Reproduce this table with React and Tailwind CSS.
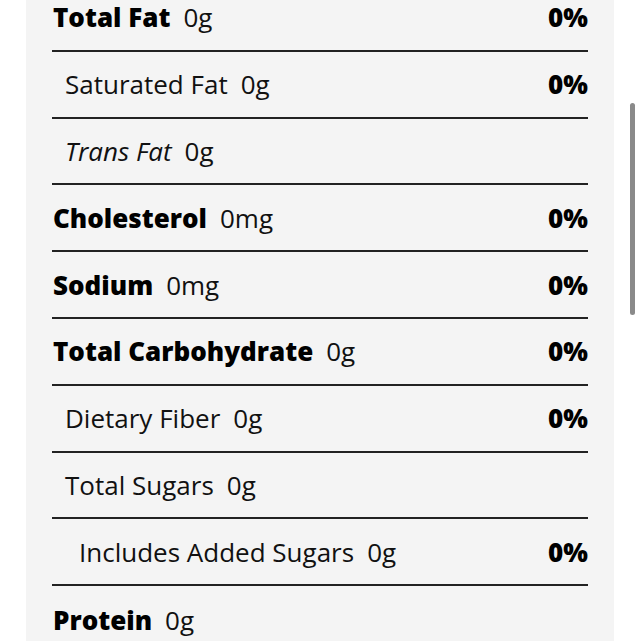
import React from 'react'

// Nutrition facts rows, from Total Fat down to Protein
const rows = [
  { label: 'Total Fat', amount: '0g', dv: '0%', bold: true },
  { label: 'Saturated Fat', amount: '0g', dv: '0%', indent: 1 },
  { label: 'Trans Fat', amount: '0g', italic: true, indent: 1 },
  { label: 'Cholesterol', amount: '0mg', dv: '0%', bold: true },
  { label: 'Sodium', amount: '0mg', dv: '0%', bold: true },
  { label: 'Total Carbohydrate', amount: '0g', dv: '0%', bold: true },
  { label: 'Dietary Fiber', amount: '0g', dv: '0%', indent: 1 },
  { label: 'Total Sugars', amount: '0g', indent: 1 },
  { label: 'Includes Added Sugars', amount: '0g', dv: '0%', indent: 2 },
  { label: 'Protein', amount: '0g', bold: true, last: true },
]

function NutrientRow({ label, amount, dv, bold, italic, indent, last }) {
  const pad = indent === 2 ? 'pl-[27px]' : indent === 1 ? 'pl-[13px]' : 'pl-px'
  return (
    <div
      className={`flex h-[66.8px] items-center justify-between ${
        last ? '' : 'border-b-2 border-[#222]'
      }`}
    >
      <div className={`flex items-center gap-[13px] ${pad}`}>
        <span
          className={
            bold
              ? 'font-extrabold text-black'
              : italic
              ? 'italic text-[#111]'
              : 'text-[#111]'
          }
        >
          {label}
        </span>
        <span className="text-[#111]">{amount}</span>
      </div>
      {dv && <span className="font-extrabold text-black">{dv}</span>}
    </div>
  )
}

export default function App() {
  return (
    <div
      className="relative h-[641px] overflow-hidden bg-white"
      style={{ fontFamily: '"Open Sans", "Noto Sans", sans-serif' }}
    >
      <div className="ml-[26px] w-[588px] bg-[#f4f4f4] px-[26px] pb-10 text-[26px] leading-none">
        <div className="-mt-[15px]">
          {rows.map((r) => (
            <NutrientRow key={r.label} {...r} />
          ))}
        </div>
      </div>

      {/* overlay scroll indicator */}
      <div className="absolute left-[630px] top-[103px] h-[212px] w-[5px] rounded-full bg-[#8a8a8a]" />
    </div>
  )
}
